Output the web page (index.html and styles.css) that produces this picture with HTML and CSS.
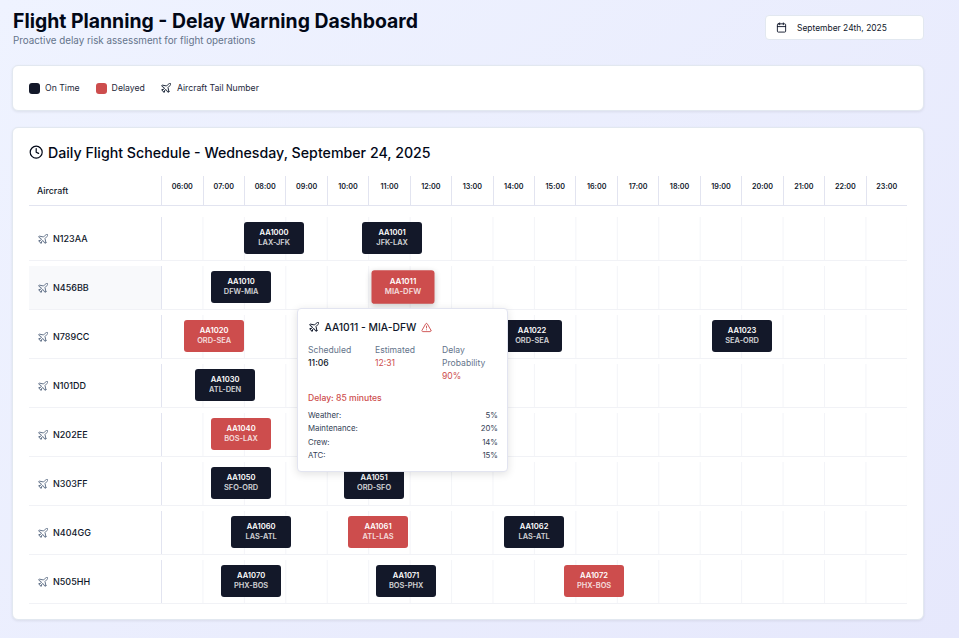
FILE: index.html
```html
<!doctype html>
<html lang="en">

<head>
  <meta charset="UTF-8" />
  <meta name="viewport" content="width=device-width, initial-scale=1.0" />
  <title>Flight Planning - Delay Warning Dashboard</title>
  <link rel="stylesheet" href="styles.css">
</head>

<body>
  <svg class="sprite" width="0" height="0" aria-hidden="true">
    <symbol id="i-plane" viewBox="0 0 24 24">
      <path d="M17.8 19.2 16 11l3.5-3.5C21 6 21.5 4 21 3c-1-.5-3 0-4.5 1.5L13 8 4.8 6.2c-.5-.1-.9.1-1.1.5l-.3.5c-.2.5-.1 1 .3 1.3L9 12l-2 3H4l-1 1 3 2 2 3 1-1v-3l3-2 3.5 5.3c.3.4.8.5 1.3.3l.5-.2c.4-.3.6-.7.5-1.2z" />
    </symbol>
    <symbol id="i-clock" viewBox="0 0 24 24">
      <circle cx="12" cy="12" r="10" />
      <polyline points="12 6 12 12 16 14" />
    </symbol>
    <symbol id="i-calendar" viewBox="0 0 24 24">
      <path d="M8 2v4" />
      <path d="M16 2v4" />
      <rect x="3" y="4" width="18" height="18" rx="2" />
      <path d="M3 10h18" />
    </symbol>
    <symbol id="i-alert" viewBox="0 0 24 24">
      <path d="m21.73 18-8-14a2 2 0 0 0-3.48 0l-8 14A2 2 0 0 0 4 21h16a2 2 0 0 0 1.73-3" />
      <path d="M12 9v4" />
      <path d="M12 17h.01" />
    </symbol>
  </svg>

  <div class="page">
    <header class="top">
      <div>
        <h1>Flight Planning - Delay Warning Dashboard</h1>
        <p class="subtitle">Proactive delay risk assessment for flight operations</p>
      </div>
      <div class="date-picker">
        <svg class="icon date-icon"><use href="#i-calendar" /></svg>
        <span>September 24th, 2025</span>
      </div>
    </header>

    <section class="card legend">
      <div class="legend-item"><span class="swatch on-time"></span>On Time</div>
      <div class="legend-item"><span class="swatch delayed"></span>Delayed</div>
      <div class="legend-item"><svg class="icon legend-plane"><use href="#i-plane" /></svg>Aircraft Tail Number</div>
    </section>

    <section class="card schedule">
      <h2><svg class="icon clock-icon"><use href="#i-clock" /></svg>Daily Flight Schedule - Wednesday, September 24, 2025</h2>

      <div class="hours">
        <div class="hours-label">Aircraft</div>
        <div class="hour">06:00</div>
        <div class="hour">07:00</div>
        <div class="hour">08:00</div>
        <div class="hour">09:00</div>
        <div class="hour">10:00</div>
        <div class="hour">11:00</div>
        <div class="hour">12:00</div>
        <div class="hour">13:00</div>
        <div class="hour">14:00</div>
        <div class="hour">15:00</div>
        <div class="hour">16:00</div>
        <div class="hour">17:00</div>
        <div class="hour">18:00</div>
        <div class="hour">19:00</div>
        <div class="hour">20:00</div>
        <div class="hour">21:00</div>
        <div class="hour">22:00</div>
        <div class="hour">23:00</div>
      </div>

      <div class="rows">
        <div class="row">
          <div class="tail"><svg class="icon tail-icon"><use href="#i-plane" /></svg>N123AA</div>
          <div class="timeline">
            <div class="flight on-time" style="left: 83px"><b>AA1000</b><span>LAX-JFK</span></div>
            <div class="flight on-time" style="left: 201px"><b>AA1001</b><span>JFK-LAX</span></div>
          </div>
        </div>
        <div class="row">
          <div class="tail hovered"><svg class="icon tail-icon"><use href="#i-plane" /></svg>N456BB</div>
          <div class="timeline">
            <div class="flight on-time" style="left: 50px"><b>AA1010</b><span>DFW-MIA</span></div>
            <div class="flight delayed active" style="left: 212px"><b>AA1011</b><span>MIA-DFW</span></div>
          </div>
        </div>
        <div class="row">
          <div class="tail"><svg class="icon tail-icon"><use href="#i-plane" /></svg>N789CC</div>
          <div class="timeline">
            <div class="flight delayed" style="left: 23px"><b>AA1020</b><span>ORD-SEA</span></div>
            <div class="flight on-time" style="left: 341px"><b>AA1022</b><span>ORD-SEA</span></div>
            <div class="flight on-time" style="left: 551px"><b>AA1023</b><span>SEA-ORD</span></div>
          </div>
        </div>
        <div class="row">
          <div class="tail"><svg class="icon tail-icon"><use href="#i-plane" /></svg>N101DD</div>
          <div class="timeline">
            <div class="flight on-time" style="left: 34px"><b>AA1030</b><span>ATL-DEN</span></div>
          </div>
        </div>
        <div class="row">
          <div class="tail"><svg class="icon tail-icon"><use href="#i-plane" /></svg>N202EE</div>
          <div class="timeline">
            <div class="flight delayed" style="left: 50px"><b>AA1040</b><span>BOS-LAX</span></div>
          </div>
        </div>
        <div class="row">
          <div class="tail"><svg class="icon tail-icon"><use href="#i-plane" /></svg>N303FF</div>
          <div class="timeline">
            <div class="flight on-time" style="left: 50px"><b>AA1050</b><span>SFO-ORD</span></div>
            <div class="flight on-time" style="left: 183px"><b>AA1051</b><span>ORD-SFO</span></div>
          </div>
        </div>
        <div class="row">
          <div class="tail"><svg class="icon tail-icon"><use href="#i-plane" /></svg>N404GG</div>
          <div class="timeline">
            <div class="flight on-time" style="left: 70px"><b>AA1060</b><span>LAS-ATL</span></div>
            <div class="flight delayed" style="left: 187px"><b>AA1061</b><span>ATL-LAS</span></div>
            <div class="flight on-time" style="left: 343px"><b>AA1062</b><span>LAS-ATL</span></div>
          </div>
        </div>
        <div class="row">
          <div class="tail"><svg class="icon tail-icon"><use href="#i-plane" /></svg>N505HH</div>
          <div class="timeline">
            <div class="flight on-time" style="left: 60px"><b>AA1070</b><span>PHX-BOS</span></div>
            <div class="flight on-time" style="left: 215px"><b>AA1071</b><span>BOS-PHX</span></div>
            <div class="flight delayed" style="left: 403px"><b>AA1072</b><span>PHX-BOS</span></div>
          </div>
        </div>
      </div>

      <div class="tooltip">
        <div class="tooltip-title">
          <svg class="icon tooltip-plane"><use href="#i-plane" /></svg>
          <span>AA1011 - MIA-DFW</span>
          <svg class="icon tooltip-alert"><use href="#i-alert" /></svg>
        </div>
        <div class="times">
          <div>
            <div class="muted">Scheduled</div>
            <div class="strong">11:06</div>
          </div>
          <div>
            <div class="muted">Estimated</div>
            <div class="red">12:31</div>
          </div>
          <div>
            <div class="muted">Delay Probability</div>
            <div class="red">90%</div>
          </div>
        </div>
        <div class="delay-text">Delay: 85 minutes</div>
        <div class="causes">
          <div class="cause"><span>Weather:</span><span>5%</span></div>
          <div class="cause"><span>Maintenance:</span><span>20%</span></div>
          <div class="cause"><span>Crew:</span><span>14%</span></div>
          <div class="cause"><span>ATC:</span><span>15%</span></div>
        </div>
      </div>
    </section>
  </div>
</body>

</html>
```

FILE: styles.css
```css
* {
  box-sizing: border-box;
}

body {
  margin: 0;
  min-height: 100vh;
  font-family: 'Inter', sans-serif;
  color: #0f172a;
  background: linear-gradient(135deg, #eff3ff, #e6e8fc);
}

.sprite {
  position: absolute;
}

.icon {
  display: block;
  flex-shrink: 0;
  fill: none;
  stroke: currentColor;
  stroke-width: 2;
  stroke-linecap: round;
  stroke-linejoin: round;
}

.page {
  width: 912px;
  margin-left: 12px;
  padding-top: 11px;
}

.top {
  display: flex;
  justify-content: space-between;
  align-items: flex-start;
  height: 54px;
}

h1 {
  margin: 0 0 0 1px;
  font-size: 19.4px;
  line-height: 21px;
  font-weight: 700;
  color: #020817;
}

.subtitle {
  margin: 2px 0 0 1px;
  font-size: 9.8px;
  line-height: 13px;
  color: #64748b;
}

.date-picker {
  display: flex;
  align-items: center;
  width: 159px;
  height: 25px;
  margin-top: 4px;
  padding-left: 10px;
  font-size: 8.45px;
  background-color: #fff;
  border: 1px solid #e2e8f0;
  border-radius: 4px;
}

.date-icon {
  width: 11px;
  height: 11px;
  margin-right: 10px;
}

.card {
  background-color: #fff;
  border: 1px solid #e2e8f0;
  border-radius: 6px;
  box-shadow: 0 1px 3px rgba(0, 0, 0, 0.08);
}

.legend {
  display: flex;
  align-items: center;
  gap: 16px;
  height: 46px;
  padding-left: 16px;
  font-size: 8.7px;
  color: #1e293b;
}

.legend-item {
  display: flex;
  align-items: center;
  gap: 5px;
}

.legend-plane {
  width: 12px;
  height: 12px;
  margin-left: -1px;
}

.swatch {
  width: 11px;
  height: 11px;
  border-radius: 3px;
}

.on-time {
  background-color: #131829;
}

.delayed {
  background-color: #cd4d4d;
}

.schedule {
  position: relative;
  height: 493px;
  margin-top: 16px;
  padding: 16px 16px 0;
}

h2 {
  display: flex;
  align-items: center;
  gap: 5px;
  margin: 0;
  font-size: 14.2px;
  line-height: 17px;
  font-weight: 500;
  color: #020817;
}

.clock-icon {
  width: 14.4px;
  height: 14.4px;
  margin-left: -0.5px;
}

.hours {
  display: grid;
  grid-template-columns: 132.1px repeat(18, 1fr);
  height: 30px;
  margin-top: 15px;
  border-bottom: 1px solid #e2e4f0;
}

.hours-label {
  align-self: center;
  padding-left: 8px;
  font-size: 8.8px;
  font-weight: 500;
}

.hour {
  padding-top: 6px;
  font-size: 7.2px;
  font-weight: 600;
  text-align: center;
  border-left: 1px solid #e2e4f0;
}

.rows {
  display: flex;
  flex-direction: column;
  gap: 5px;
  margin-top: 11px;
}

.row {
  display: grid;
  grid-template-columns: 132.1px 1fr;
  height: 44px;
  border-bottom: 1px solid #f1f2f6;
}

.tail {
  display: flex;
  align-items: center;
  gap: 4px;
  padding-left: 8px;
  font-size: 9px;
  font-weight: 500;
}

.tail.hovered {
  background-color: #f8f9fb;
}

.tail-icon {
  width: 12px;
  height: 12px;
  color: #64748b;
}

.timeline {
  position: relative;
  border-left: 1px solid #e2e4f0;
  background-image: linear-gradient(to right, #f3f4f8 1px, transparent 1px);
  background-origin: border-box;
  background-size: calc(100% / 18) 100%;
}

.flight {
  position: absolute;
  top: 5px;
  display: flex;
  flex-direction: column;
  align-items: center;
  justify-content: center;
  width: 60px;
  height: 32px;
  margin-left: -1px;
  font-size: 7.6px;
  line-height: 10px;
  color: #fff;
  border-radius: 3px;
}

.flight b {
  font-weight: 600;
}

.flight span {
  font-size: 7.4px;
  font-weight: 600;
  opacity: 0.8;
}

.flight.active {
  transform: scale(1.05);
  box-shadow: 0 2px 6px rgba(0, 0, 0, 0.2);
}

.tooltip {
  position: absolute;
  left: 284px;
  top: 180px;
  width: 211px;
  height: 164px;
  padding: 11px 9px 0 10px;
  font-size: 8.6px;
  background-color: #fff;
  border: 1px solid #e2e4f0;
  border-radius: 4px;
  box-shadow: 0 2px 8px rgba(0, 0, 0, 0.12);
}

.tooltip-title {
  display: flex;
  align-items: center;
  gap: 5px;
  height: 14px;
  font-size: 10.3px;
  font-weight: 500;
}

.tooltip-plane {
  width: 12px;
  height: 12px;
  margin-left: -0.5px;
}

.tooltip-alert {
  width: 11px;
  height: 11px;
  color: #cd4d4d;
}

.times {
  display: grid;
  grid-template-columns: repeat(3, 1fr);
  gap: 0 11px;
  margin-top: 10px;
  line-height: 13px;
}

.muted {
  color: #64748b;
}

.strong {
  font-weight: 500;
}

.red {
  color: #cd4d4d;
}

.delay-text {
  margin-top: 9px;
  line-height: 13px;
  font-weight: 500;
  color: #cd4d4d;
}

.causes {
  margin-top: 4px;
  font-size: 7.8px;
  line-height: 13.4px;
  color: #334155;
}

.cause {
  display: flex;
  justify-content: space-between;
}
```
